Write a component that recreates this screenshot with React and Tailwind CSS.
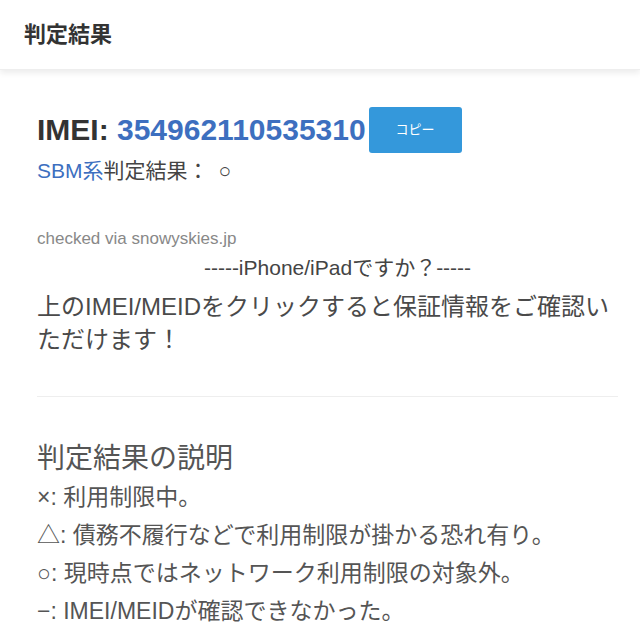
const font = { fontFamily: '"Liberation Sans", "Noto Sans CJK JP", sans-serif' }

const notes = [
    "×: 利用制限中。",
    "△: 債務不履行などで利用制限が掛かる恐れ有り。",
    "○: 現時点ではネットワーク利用制限の対象外。",
    "−: IMEI/MEIDが確認できなかった。",
]

const App = () => {
    return (
        <div className="w-[640px] h-[640px] overflow-hidden bg-white text-[#333]" style={font}>
            <header className="h-[70px] flex items-center px-[24px] bg-white shadow-[0_3px_6px_rgba(0,0,0,0.08)] border-b border-[#eee]">
                <h1 className="text-[22px] font-bold text-[#333]">判定結果</h1>
            </header>

            <section className="pl-[37px] pr-[22px] pt-[37px]">
                <div className="flex items-center">
                    <p className="text-[30px] font-bold leading-none text-[#333]">
                        IMEI: <span className="text-[#3d6fbf]">354962110535310</span>
                    </p>
                    <button className="ml-[3px] w-[93px] h-[46px] rounded-[3px] bg-[#3498db] text-white text-[13px]">コピー</button>
                </div>
                <p className="text-[21px] mt-[4px] leading-[28px] text-[#444]">
                    <span className="text-[#3d6fbf]">SBM系</span>判定結果：<span className="ml-[10px]">○</span>
                </p>

                <p className="mt-[44px] text-[17px] leading-[20px] text-[#888]">checked via snowyskies.jp</p>
                <p className="mt-[5px] text-[21px] leading-[28px] text-[#444] text-center pl-[20px]">-----iPhone/iPadですか？-----</p>
                <p className="mt-[8px] text-[24px] leading-[33px] text-[#4a4a4a]">
                    上のIMEI/MEIDをクリックすると保証情報をご確認いただけます！
                </p>

                <hr className="mt-[40px] border-0 border-t border-[#eee]" />

                <h2 className="mt-[46px] text-[28px] leading-[32px] text-[#555]">判定結果の説明</h2>
                <ul className="mt-[3px] text-[23px] leading-[38px] text-[#555]">
                    {notes.map((n, i) => (
                        <li key={i}>{n}</li>
                    ))}
                </ul>
            </section>
        </div>
    )
}

export default App
